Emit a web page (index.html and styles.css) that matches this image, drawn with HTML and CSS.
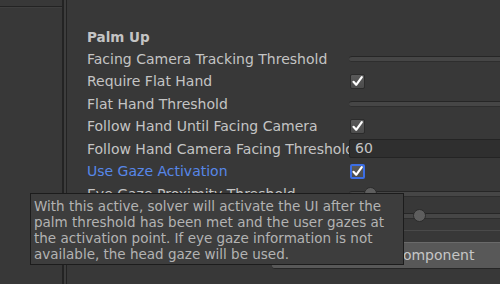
FILE: index.html
```html
<!DOCTYPE html>
<html>
<head>
<meta charset="utf-8">
<link rel="stylesheet" href="styles.css">
</head>
<body>
<div class="app">
  <div class="left"><div class="left-top"></div></div>
  <div class="splitter"></div>
  <div class="inspector">
    <div class="header">Palm Up</div>
    <div class="row"><div class="label">Facing Camera Tracking Threshold</div><div class="field"><div class="track"></div></div></div>
    <div class="row"><div class="label">Require Flat Hand</div><div class="field"><span class="check"><svg viewBox="0 0 15 15" width="15" height="15"><path d="M3.5 7.8 L6.2 10.8 L11.8 3.2" fill="none" stroke="#fff" stroke-width="2.2" stroke-linecap="round" stroke-linejoin="round"/></svg></span></div></div>
    <div class="row"><div class="label">Flat Hand Threshold</div><div class="field"><div class="track"></div></div></div>
    <div class="row"><div class="label">Follow Hand Until Facing Camera</div><div class="field"><span class="check"><svg viewBox="0 0 15 15" width="15" height="15"><path d="M3.5 7.8 L6.2 10.8 L11.8 3.2" fill="none" stroke="#fff" stroke-width="2.2" stroke-linecap="round" stroke-linejoin="round"/></svg></span></div></div>
    <div class="row"><div class="label">Follow Hand Camera Facing Threshold</div><div class="field"><div class="num">60</div></div></div>
    <div class="row"><div class="label active">Use Gaze Activation</div><div class="field"><span class="check focus"><svg viewBox="0 0 15 15" width="15" height="15"><path d="M3.5 7.8 L6.2 10.8 L11.8 3.2" fill="none" stroke="#fff" stroke-width="2.2" stroke-linecap="round" stroke-linejoin="round"/></svg></span></div></div>
    <div class="row"><div class="label">Eye Gaze Proximity Threshold</div><div class="field"><div class="track"><span class="knob k1"></span></div></div></div>
    <div class="row"><div class="label">Eye Gaze Proximity Threshold</div><div class="field"><div class="track"><span class="knob k2"></span></div></div></div>
    <div class="sep"></div>
    <div class="btnrow"><div class="button">Add Component</div></div>
  </div>
</div>
<div class="tooltip">With this active, solver will activate the UI after the<br>palm threshold has been met and the user gazes at<br>the activation point. If eye gaze information is not<br>available, the head gaze will be used.</div>
</body>
</html>
```

FILE: styles.css
```css
html, body {
  margin: 0;
  padding: 0;
  width: 500px;
  height: 284px;
  overflow: hidden;
  background: #383838;
  font-family: "DejaVu Sans", sans-serif;
  font-size: 14px;
  color: #c4c4c4;
}
.app {
  display: flex;
  height: 284px;
  width: 500px;
  overflow: hidden;
}
.left {
  width: 62px;
  flex: none;
  background: #383838;
}
.left-top {
  margin-top: 6px;
  height: 1px;
  background: #232323;
  border-bottom: 1px solid #3f3f3f;
}
.splitter {
  flex: none;
  width: 2px;
  border-left: 2px solid #232323;
  border-right: 1px solid #232323;
  background: #3d3d3d;
}
.inspector {
  flex: none;
  width: 500px;
  padding-left: 20px;
  padding-top: 28px;
}
.header {
  font-weight: bold;
  font-size: 13.5px;
  height: 19.5px;
  line-height: 19.5px;
}
.row {
  display: flex;
  align-items: center;
  height: 22.5px;
}
.label {
  width: 262px;
  flex: none;
  white-space: nowrap;
  overflow: hidden;
}
.label.active {
  color: #5787e8;
}
.field {
  width: 170px;
  flex: none;
  display: flex;
  align-items: center;
}
.track {
  position: relative;
  width: 100%;
  height: 4px;
  background: #464646;
  border-top: 1px solid #262626;
  border-bottom: 1px solid #2e2e2e;
  border-radius: 3px;
}
.knob {
  position: absolute;
  top: -5px;
  width: 11px;
  height: 11px;
  border-radius: 50%;
  background: #5e5e5e;
  border: 1px solid #2b2b2b;
}
.k1 { left: 15px; }
.k2 { left: 64px; }
.check {
  margin-left: 1px;
  width: 15px;
  height: 15px;
  box-sizing: border-box;
  border: 1px solid #2c2c2c;
  border-radius: 2px;
  background: linear-gradient(#5a5a5a, #4c4c4c);
  display: flex;
  align-items: center;
  justify-content: center;
}
.check svg { display: block; flex: none; }
.check.focus {
  border: 2px solid #3c6ee4;
}
.num {
  width: 100%;
  height: 19px;
  box-sizing: border-box;
  background: #2f2f2f;
  border: 1px solid #242424;
  border-radius: 2px;
  padding-left: 5px;
  line-height: 17px;
}
.sep {
  margin-top: 2px;
  margin-left: 185px;
  height: 1px;
  background: #4a4a4a;
}
.btnrow {
  padding-top: 11px;
  padding-left: 185px;
}
.button {
  width: 292px;
  height: 25px;
  line-height: 25px;
  text-align: center;
  background: #585858;
  border-top: 1px solid #6a6a6a;
  border-bottom: 1px solid #262626;
  border-radius: 3px;
  font-size: 14px;
  color: #c6c6c6;
}
.tooltip {
  position: absolute;
  left: 30px;
  top: 193px;
  width: 366px;
  height: 63px;
  padding: 4px 3px 3px 3px;
  background: #3d3d3d;
  border: 1px solid #1c1c1c;
  font-size: 13.5px;
  line-height: 16px;
  color: #b3b3b3;
  white-space: nowrap;
  overflow: hidden;
}
```
